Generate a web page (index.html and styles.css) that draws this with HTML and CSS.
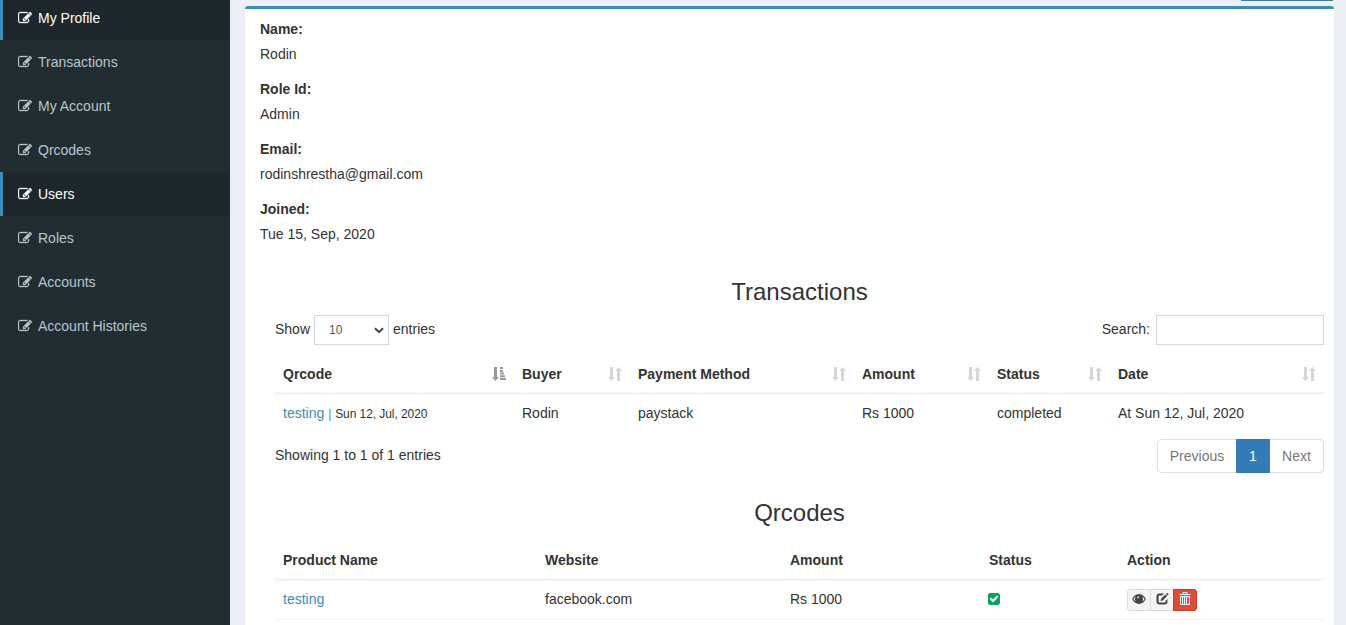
FILE: index.html
```
<!DOCTYPE html>
<html lang="en">
<head>
<meta charset="utf-8">
<title>My Profile</title>
<link rel="stylesheet" href="styles.css">
</head>
<body>
<svg class="defs" aria-hidden="true">
<symbol id="edit" viewBox="0 0 1792 1792"><path d="M888 1184l116-116-152-152-116 116v56h96v96h56zm520-126v190q0 119-84.5 203.5t-203.500 84.500h-832q-119 0-203.500-84.500t-84.500-203.500v-832q0-119 84.500-203.500t203.500-84.500h832q63 0 117 25 15 7 18 23 3 17-9 29l-49 49q-14 14-32 8-23-6-45-6h-832q-66 0-113 47t-47 113v832q0 66 47 113t113 47h832q66 0 113-47t47-113v-126q0-13 9-22l64-64q15-15 35-7t20 29zm-96-738l288 288-672 672h-288v-288zm444 132l-92 92-288-288 92-92q28-28 68-28t68 28l152 152q28 28 28 68t-28 68z"/></symbol>
<symbol id="check" viewBox="128 128 1536 1536"><path d="M813 1299l614-614q19-19 19-45t-19-45l-102-102q-19-19-45-19t-45 19l-467 467-211-211q-19-19-45-19t-45 19l-102 102q-19 19-19 45t19 45l358 358q19 19 45 19t45-19zm851-883v960q0 119-84.5 203.5t-203.5 84.5h-960q-119 0-203.5-84.5t-84.5-203.5v-960q0-119 84.5-203.5t203.5-84.5h960q119 0 203.5 84.5t84.5 203.5z"/></symbol>
<symbol id="sort" viewBox="0 0 14 14"><path d="M2 0h3v10h2l-3.5 4L0 10h2zM9 14h3V4h2l-3.5-4L7 4h2z"/></symbol>
<symbol id="sorted" viewBox="0 0 14 14"><path d="M2 0h3v10h2l-3.500 4L0 10h2zM8 0h3v2H8zM8 3h3v2H8zM8 5.600h4v2H8zM8 8.300h5v2H8zM8 11h6v2H8z"/></symbol>
<symbol id="eye" viewBox="0 0 14 12"><path fill-rule="evenodd" d="M7 1C3.800 1 1.500 3.200.2 6c1.300 2.800 3.600 5 6.800 5S12.500 8.800 13.800 6C12.500 3.200 10.200 1 7 1zM3.800 3.400a4 4 0 0 0 .5 5.200C3 8 2 7.100 1.500 6 2 4.900 2.800 4 3.800 3.400zm6.400 0c1 .6 1.800 1.500 2.300 2.600-.5 1.100-1.500 2-2.800 2.600a4 4 0 0 0 .5-5.200zM5 4.600 6.800 3l.6.8L5.600 5.500z"/></symbol>
<symbol id="modify" viewBox="0 0 13 12"><path d="M8 .5H3.500Q.5.500.5 3.500v5q0 3 3 3h5q3 0 3-3V6l-2 2v.7q0 .9-.9.900H3.500q-.9 0-.9-.9V3.500q0-.9.9-.9h2.600zM5 5.800 9.400 1.400l1.700 1.700L6.700 7.500 4.500 8.100zM10 .9l.8-.8q.3-.2.6 0l1.100 1.100q.2.300 0 .6l-.8.8z"/></symbol>
<symbol id="trash" viewBox="0 0 12 14"><path class="can" d="M2 5h8v7.500H2z"/><path class="lines" d="M.5 2.500h11M4 2V.5h4V2M1.500 4.500h9v8h-9zM3.500 5v7M5.500 5v7M7.500 5v7"/></symbol>
</svg>
<div class="app">
  <nav class="sidebar">
    <a class="item active"><svg><use href="#edit"/></svg>My Profile</a>
    <a class="item"><svg><use href="#edit"/></svg>Transactions</a>
    <a class="item"><svg><use href="#edit"/></svg>My Account</a>
    <a class="item"><svg><use href="#edit"/></svg>Qrcodes</a>
    <a class="item active"><svg><use href="#edit"/></svg>Users</a>
    <a class="item"><svg><use href="#edit"/></svg>Roles</a>
    <a class="item"><svg><use href="#edit"/></svg>Accounts</a>
    <a class="item"><svg><use href="#edit"/></svg>Account Histories</a>
  </nav>
  <main class="content">
    <div class="header-button"></div>
    <section class="box">
      <dl class="profile">
        <dt>Name:</dt><dd>Rodin</dd>
        <dt>Role Id:</dt><dd>Admin</dd>
        <dt>Email:</dt><dd>rodinshrestha@gmail.com</dd>
        <dt>Joined:</dt><dd>Tue 15, Sep, 2020</dd>
      </dl>
      <div class="tables">
        <h3>Transactions</h3>
        <div class="toolbar">
          <label class="length">Show <span class="select">10<svg viewBox="0 0 10 7"><path d="M1 1.200l4 4 4-4"/></svg></span> entries</label>
          <label class="search">Search:<input type="text"></label>
        </div>
        <table class="transactions">
          <colgroup><col class="t1"><col class="t2"><col class="t3"><col class="t4"><col class="t5"><col></colgroup>
          <thead><tr>
            <th><div>Qrcode<svg class="on"><use href="#sorted"/></svg></div></th>
            <th><div>Buyer<svg><use href="#sort"/></svg></div></th>
            <th><div>Payment Method<svg><use href="#sort"/></svg></div></th>
            <th><div>Amount<svg><use href="#sort"/></svg></div></th>
            <th><div>Status<svg><use href="#sort"/></svg></div></th>
            <th><div>Date<svg><use href="#sort"/></svg></div></th>
          </tr></thead>
          <tbody><tr>
            <td><a>testing <small>|</small></a> <small class="when">Sun 12, Jul, 2020</small></td>
            <td>Rodin</td><td>paystack</td><td>Rs 1000</td><td>completed</td><td>At Sun 12, Jul, 2020</td>
          </tr></tbody>
        </table>
        <div class="footer">
          <span>Showing 1 to 1 of 1 entries</span>
          <div class="pages"><a class="prev">Previous</a><a class="current">1</a><a class="next">Next</a></div>
        </div>
        <h3 class="second">Qrcodes</h3>
        <table class="qrcodes">
          <colgroup><col class="q1"><col class="q2"><col class="q3"><col class="q4"><col></colgroup>
          <thead><tr><th>Product Name</th><th>Website</th><th>Amount</th><th>Status</th><th>Action</th></tr></thead>
          <tbody><tr>
            <td><a>testing</a></td><td>facebook.com</td><td>Rs 1000</td>
            <td><svg class="check"><use href="#check"/></svg></td>
            <td><div class="actions"><button><svg class="eye"><use href="#eye"/></svg></button><button><svg class="modify"><use href="#modify"/></svg></button><button class="danger"><svg class="trash"><use href="#trash"/></svg></button></div></td>
          </tr></tbody>
        </table>
      </div>
    </section>
  </main>
</div>
</body>
</html>
```
FILE: styles.css
```
* { box-sizing: border-box; }
body { margin: 0; height: 625px; overflow: hidden; font: 14px/20px "Liberation Sans", Arial, sans-serif; color: #333; }
.defs { display: none; }
.app { display: flex; height: 625px; background: #ecf0f5; }
.sidebar { width: 230px; flex: none; background: #222d32; }
.item { display: flex; align-items: center; height: 44px; padding-left: 15px; border-left: 3px solid transparent; color: #b8c7ce; }
.item:first-child { height: 40px; padding-bottom: 4px; }
.item svg { width: 14px; height: 14px; margin-right: 6px; fill: currentColor; stroke: currentColor; stroke-width: 40px; }
.item.active { background: #1e282c; border-color: #3c8dbc; color: #fff; }
.content { flex: 1; padding: 0 12px 0 15px; overflow: hidden; }
.header-button { width: 92px; height: 1px; margin: 0 1px 5px auto; background: #367fa9; }
.box { height: 640px; padding: 10px 10px 10px 15px; background: #fff; border-top: 3px solid #3c8dbc; border-radius: 3px; box-shadow: 0 1px 1px rgba(0,0,0,.1); }
.profile { margin: 0; }
.profile dt { font-weight: bold; margin-bottom: 5px; }
.profile dd { margin: 0 0 15px; }
.profile dd:last-child { margin-bottom: 0; }
.tables { padding: 15px 0 0 15px; }
h3 { margin: 20px 0 10px; font-size: 24px; line-height: 26px; font-weight: normal; text-align: center; }
.toolbar { display: flex; justify-content: space-between; height: 30px; }
.toolbar label { display: flex; align-items: flex-start; height: 30px; line-height: 28px; }
.length { gap: 4px; }
.select { display: flex; align-items: center; justify-content: space-between; width: 75px; height: 30px; padding: 0 4px 0 14px; border: 1px solid #d2d6de; color: #555; font-size: 12px; }
.select svg { width: 10px; height: 7px; fill: none; stroke: #444; stroke-width: 2; }
.search input { width: 168px; height: 30px; margin-left: 6px; border: 1px solid #d2d6de; background: #fff; }
table { width: 100%; table-layout: fixed; border-collapse: separate; border-spacing: 0; }
th, td { padding: 8px; text-align: left; vertical-align: top; white-space: nowrap; }
th { height: 39px; border-bottom: 3px solid #f4f4f4; }
td { height: 36px; }
.transactions { margin-top: 11px; }
th div { display: flex; align-items: center; justify-content: space-between; height: 20px; }
th svg { width: 14px; height: 14px; fill: #d6d6d6; }
th svg.on { fill: #999; }
.t1 { width: 239px; } .t2 { width: 116px; } .t3 { width: 224px; } .t4 { width: 135px; } .t5 { width: 121px; }
small { font-size: 12px; line-height: 1; }
.when { letter-spacing: -.07px; }
a { color: #3c8dbc; }
.footer { display: flex; justify-content: space-between; margin-top: 8px; height: 34px; }
.footer > span { padding-top: 6px; }
.pages { display: flex; }
.pages a { height: 34px; line-height: 20px; padding: 6px 0; text-align: center; border: 1px solid #ddd; color: #777; }
.pages .prev { width: 80px; border-radius: 4px 0 0 4px; }
.pages .current { position: relative; width: 34px; margin-left: -1px; color: #fff; background: #337ab7; border-color: #337ab7; }
.pages .next { width: 55px; margin-left: -1px; border-radius: 0 4px 4px 0; }
.second { margin: 27px 0 16px; }
.q1 { width: 262px; } .q2 { width: 245px; } .q3 { width: 199px; } .q4 { width: 138px; }
.qrcodes td { height: 39px; border-bottom: 1px solid #f4f4f4; }
.check { display: block; width: 12px; height: 12px; margin: 4px 0 0 -1px; fill: #00a65a; }
.actions { display: flex; height: 22px; }
.actions button { display: flex; align-items: center; justify-content: center; width: 24px; height: 22px; padding: 0 0 2px; background: #f4f4f4; border: 1px solid #ddd; color: #444; border-radius: 3px 0 0 3px; }
.actions button + button { margin-left: -1px; border-radius: 0; }
.actions button.danger { background: #dd4b39; border-color: #d73925; border-radius: 0 3px 3px 0; }
.actions svg { fill: currentColor; }
.eye { width: 14px; height: 12px; }
.modify { width: 13px; height: 12px; }
.trash { width: 12px; height: 14px; }
.can { fill: #f532a0; }
.lines { fill: none; stroke: #fff; stroke-width: 1; }
```
